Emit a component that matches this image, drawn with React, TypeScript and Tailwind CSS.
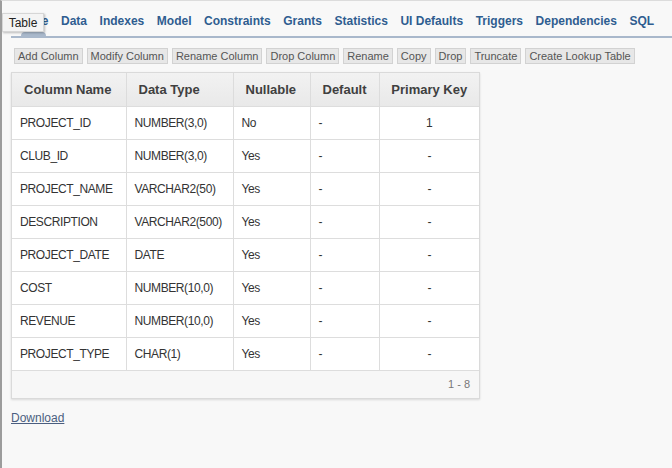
import React from "react";

const tabs = ["Table", "Data", "Indexes", "Model", "Constraints", "Grants", "Statistics", "UI Defaults", "Triggers", "Dependencies", "SQL"];
const buttons = ["Add Column", "Modify Column", "Rename Column", "Drop Column", "Rename", "Copy", "Drop", "Truncate", "Create Lookup Table"];
const rows: [string, string, string, string, string][] = [
  ["PROJECT_ID", "NUMBER(3,0)", "No", "-", "1"],
  ["CLUB_ID", "NUMBER(3,0)", "Yes", "-", "-"],
  ["PROJECT_NAME", "VARCHAR2(50)", "Yes", "-", "-"],
  ["DESCRIPTION", "VARCHAR2(500)", "Yes", "-", "-"],
  ["PROJECT_DATE", "DATE", "Yes", "-", "-"],
  ["COST", "NUMBER(10,0)", "Yes", "-", "-"],
  ["REVENUE", "NUMBER(10,0)", "Yes", "-", "-"],
  ["PROJECT_TYPE", "CHAR(1)", "Yes", "-", "-"],
];

export default function App() {
  return (
    <div
      className="relative w-[672px] h-[468px] overflow-hidden bg-[#f8f8f8] border-l-2 border-l-[#9c9c9c] border-t border-t-[#dcdcdc]"
      style={{ fontFamily: '"Liberation Sans", Arial, sans-serif' }}
    >
      {/* Tabs */}
      <div className="relative ml-[9px] h-[37px] border-b-2 border-b-[#a9b8cb]">
        <div className="flex items-center h-[35px] pl-[7px] gap-[12.55px]">
          {tabs.map((t) => (
            <div key={t} className="relative text-[12px] font-bold text-[#2f5d90] whitespace-nowrap leading-none pt-[5px]">
              {t}
              {t === "Table" && (
                <div className="absolute left-[3px] right-[2px] top-[22px] h-[4px] rounded-t-[6px] bg-[#a9b8cb]" />
              )}
            </div>
          ))}
        </div>
      </div>

      {/* Tooltip */}
      <div className="absolute left-0 top-[12px] h-[19px] w-[42px] flex items-center justify-center bg-[#f4f4f4] border border-[#d6d6d6] shadow-[1px_1px_2px_rgba(0,0,0,0.25)] text-[12px] text-[#222]">
        Table
      </div>

      {/* Buttons */}
      <div className="flex gap-[4px] ml-[12px] mt-[10px]">
        {buttons.map((b) => (
          <div
            key={b}
            className="h-[16px] px-[3px] flex items-center bg-[#e7e7e7] border border-[#d2d2d2] text-[11px] text-[#555] whitespace-nowrap leading-none"
          >
            {b}
          </div>
        ))}
      </div>

      {/* Table */}
      <div className="ml-[9px] mt-[8px] w-[469px] border border-[#dadada] bg-[#f7f7f7] shadow-[0_1px_2px_rgba(0,0,0,0.12)]">
        <table className="w-full border-collapse table-fixed">
          <colgroup>
            <col className="w-[114px]" />
            <col className="w-[107px]" />
            <col className="w-[77px]" />
            <col className="w-[69px]" />
            <col />
          </colgroup>
          <thead>
            <tr className="h-[33px] bg-gradient-to-b from-[#f2f2f2] to-[#e9e9e9]">
              {["Column Name", "Data Type", "Nullable", "Default", "Primary Key"].map((h, i) => (
                <th
                  key={h}
                  className={`border-l border-[#dcdcdc] first:border-l-0 text-[13px] font-bold text-[#404040] ${i === 4 ? "text-center" : "text-left pl-[12px]"}`}
                >
                  {h}
                </th>
              ))}
            </tr>
          </thead>
          <tbody>
            {rows.map((r) => (
              <tr key={r[0]} className="h-[33px] bg-white border-t border-[#dddddd]">
                {r.map((c, i) => (
                  <td
                    key={i}
                    className={`border-l border-[#dddddd] first:border-l-0 text-[12px] tracking-[-0.4px] text-[#333] ${i === 4 ? "text-center" : "pl-[8px]"}`}
                  >
                    {c}
                  </td>
                ))}
              </tr>
            ))}
          </tbody>
        </table>
        <div className="h-[28px] border-t border-[#dddddd] flex items-center justify-end pr-[9px] text-[11px] text-[#777]">
          1 - 8
        </div>
      </div>

      {/* Download */}
      <div className="ml-[9px] mt-[6px]">
        <a href="#" className="text-[12px] text-[#4b5e80] underline">
          Download
        </a>
      </div>
    </div>
  );
}
